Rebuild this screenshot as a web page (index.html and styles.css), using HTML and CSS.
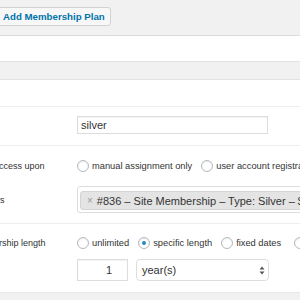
FILE: index.html
```html
<!DOCTYPE html>
<html>
<head>
<meta charset="utf-8">
<link rel="stylesheet" href="styles.css">
</head>
<body>
<div class="page">
  <div class="top">
    <span class="add-btn">Add Membership Plan</span>
  </div>
  <div class="title-box"></div>
  <div class="meta-head"></div>
  <div class="panel">
    <div class="row row-empty"></div>
    <div class="row row-slug">
      <div class="label"></div>
      <div class="field"><div class="text-input">silver</div></div>
    </div>
    <div class="row row-grant">
      <div class="label">Grant access upon</div>
      <div class="field radios">
        <span class="radio"></span><span class="rlabel">manual assignment only</span>
        <span class="radio"></span><span class="rlabel">user account registration</span>
      </div>
    </div>
    <div class="row row-products">
      <div class="label">Products</div>
      <div class="field">
        <div class="select2">
          <span class="chip"><span class="chip-x">×</span>#836 – Site Membership – Type: Silver – $10.00</span>
        </div>
      </div>
    </div>
    <div class="row row-length">
      <div class="label">Membership length</div>
      <div class="field">
        <div class="radios">
          <span class="radio"></span><span class="rlabel">unlimited</span>
          <span class="radio checked"></span><span class="rlabel">specific length</span>
          <span class="radio"></span><span class="rlabel wide">fixed dates</span>
          <span class="radio"></span><span class="rlabel">subscription</span>
        </div>
        <div class="length-inputs">
          <div class="num-input">1</div>
          <div class="select">
            <span>year(s)</span>
            <svg class="arrows" width="6" height="9" viewBox="0 0 6 9"><path d="M3 0.5L5.5 3.5H0.5Z" fill="#555"/><path d="M3 8.5L5.5 5.5H0.5Z" fill="#555"/></svg>
          </div>
        </div>
      </div>
    </div>
  </div>
</div>
</body>
</html>
```

FILE: styles.css
```css
html, body {
  margin: 0;
  padding: 0;
  overflow: hidden;
  background: #f1f1f1;
}
body {
  font-family: "Liberation Sans", Arial, sans-serif;
  color: #333;
}
.page {
  width: 700px;
}
.top {
  height: 36px;
  padding-top: 6px;
  box-sizing: border-box;
  border-bottom: 1px solid #dcdcdc;
}
.add-btn {
  display: inline-flex;
  align-items: center;
  box-sizing: border-box;
  height: 19px;
  margin-left: -4px;
  padding: 0 5px 0 6px;
  background: #f7f7f7;
  border: 1px solid #d2d2d2;
  border-radius: 3px;
  color: #0073aa;
  font-size: 9.7px;
  font-weight: bold;
}
.title-box {
  height: 25px;
  background: #fff;
  border-bottom: 1px solid #e2e2e2;
}
.meta-head {
  height: 17px;
  background: #f1f1f1;
  border-bottom: 1px solid #e2e2e2;
}
.panel {
  background: #fff;
  border-bottom: 1px solid #e6e6e6;
  margin-left: -31px;
}
.row {
  display: flex;
  align-items: flex-start;
}
.label {
  width: 108px;
  flex: none;
  font-size: 9px;
  color: #333;
  white-space: nowrap;
}
.field {
  flex: 1;
}
.row-empty {
  height: 26px;
  border-bottom: 1px solid #eee;
}
.row-slug {
  padding: 9px 0 11px;
  border-bottom: 1px solid #eee;
  align-items: center;
}
.text-input {
  width: 191px;
  height: 18px;
  box-sizing: border-box;
  border: 1px solid #ddd;
  box-shadow: inset 0 1px 1px rgba(0,0,0,0.05);
  font-size: 11px;
  line-height: 16px;
  padding-left: 3px;
  color: #333;
}
.radios {
  display: flex;
  align-items: center;
  white-space: nowrap;
}
.radio {
  width: 12px;
  height: 12px;
  box-sizing: border-box;
  border: 1px solid #b4b9be;
  border-radius: 50%;
  background: #fff;
  box-shadow: inset 0 1px 2px rgba(0,0,0,0.08);
  flex: none;
  position: relative;
}
.radio.checked::after {
  content: "";
  position: absolute;
  left: 3px;
  top: 3px;
  width: 4px;
  height: 4px;
  border-radius: 50%;
  background: #1e8cbe;
}
.rlabel {
  font-size: 9.3px;
  margin-left: 3px;
  margin-right: 9px;
  color: #333;
}
.rlabel.wide {
  margin-right: 13px;
}
.row-grant {
  padding: 14px 0 7px;
  align-items: center;
}
.row-products {
  padding: 7px 0 10px;
  border-bottom: 1px solid #eee;
  align-items: center;
}
.select2 {
  height: 27px;
  box-sizing: border-box;
  border: 1px solid #ddd;
  border-radius: 3px;
  padding: 3px 0 0 2px;
  white-space: nowrap;
}
.chip {
  display: inline-flex;
  align-items: center;
  height: 19px;
  box-sizing: border-box;
  background: #e4e4e4;
  border: 1px solid #d4d4d4;
  border-radius: 3px;
  padding: 0 0 0 6px;
  font-size: 11px;
  color: #333;
}
.chip-x {
  color: #999;
  font-size: 10px;
  margin-right: 4px;
}
.row-length {
  padding: 13px 0 11px;
}
.row-length .label {
  height: 12px;
  line-height: 12px;
}
.length-inputs {
  display: flex;
  margin-top: 10px;
  gap: 8px;
}
.num-input {
  width: 51px;
  height: 22px;
  box-sizing: border-box;
  border: 1px solid #ddd;
  box-shadow: inset 0 1px 1px rgba(0,0,0,0.05);
  font-size: 11px;
  line-height: 20px;
  text-align: right;
  padding-right: 15px;
}
.select {
  width: 133px;
  height: 22px;
  box-sizing: border-box;
  border: 1px solid #ddd;
  border-radius: 4px;
  display: flex;
  align-items: center;
  justify-content: space-between;
  padding: 0 3px 0 5px;
  font-size: 11px;
}
.arrows {
  display: block;
}
```
